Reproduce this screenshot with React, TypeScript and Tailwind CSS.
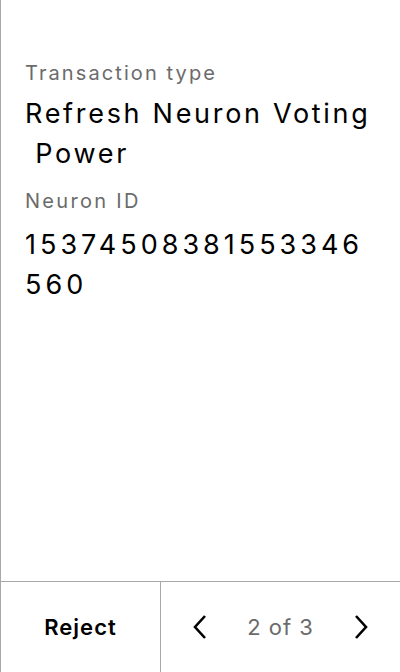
import React from "react";

function Lines({ lines, className }: { lines: string[]; className: string }) {
  return (
    <div className={className}>
      {lines.map((l, i) => (
        <div key={i} className="whitespace-pre">
          {l}
        </div>
      ))}
    </div>
  );
}

export default function App() {
  return (
    <div
      className="w-[400px] h-[672px] flex flex-col bg-white border-l border-[#a8a8a8] overflow-hidden"
      style={{ fontFamily: "Inter, 'Noto Sans', sans-serif" }}
    >
      <div className="flex-1 flex flex-col pl-6 pr-5 pt-[61px]">
        <div className="text-[20px] leading-6 tracking-[2.1px] text-[#6b6b6b]">Transaction type</div>
        <Lines
          lines={["Refresh Neuron Voting", " Power"]}
          className="mt-[9px] text-[27px] leading-[40px] tracking-[2.7px] text-black"
        />
        <div className="mt-[15px] text-[20px] leading-6 tracking-[2.3px] text-[#6b6b6b]">Neuron ID</div>
        <Lines
          lines={["15374508381553346", "560"]}
          className="mt-3 text-[27px] leading-[40px] tracking-[4px] text-black"
        />
      </div>
      <div className="h-[91px] flex border-t border-[#a8a8a8]">
        <div className="w-[160px] shrink-0 flex items-center justify-center border-r border-[#a8a8a8] text-[22px] tracking-[1px] font-semibold text-black">
          Reject
        </div>
        <div className="flex-1 flex items-center justify-between pl-[30px] pr-[30px]">
          <svg width="18" height="26" viewBox="0 0 18 26" fill="none">
            <path d="M14 2 L4 13 L14 24" stroke="#000" strokeWidth="2.6" />
          </svg>
          <span className="text-[22px] tracking-[1px] text-[#6b6b6b]">2 of 3</span>
          <svg width="18" height="26" viewBox="0 0 18 26" fill="none">
            <path d="M4 2 L14 13 L4 24" stroke="#000" strokeWidth="2.6" />
          </svg>
        </div>
      </div>
    </div>
  );
}
